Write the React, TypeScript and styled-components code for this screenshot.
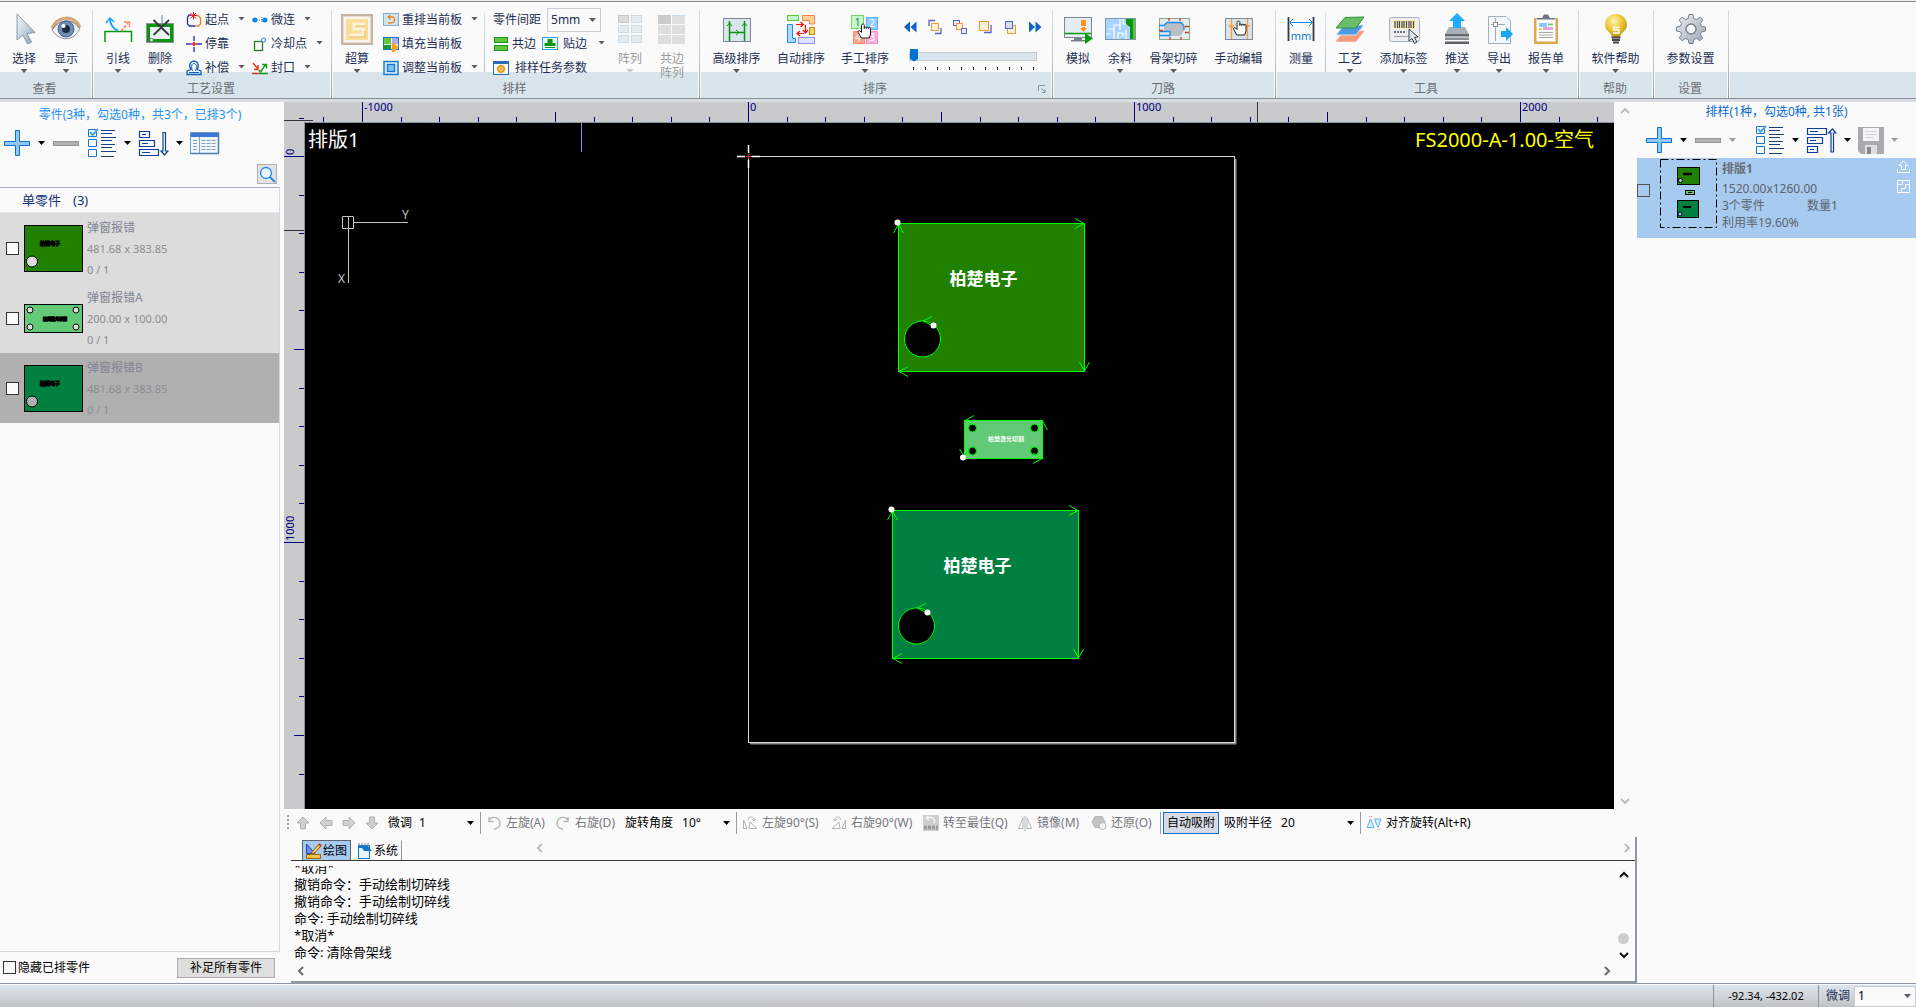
import React from "react";
import styled, { createGlobalStyle, css } from "styled-components";

const Global = createGlobalStyle`
  *, *::before, *::after { box-sizing: border-box; }
  html, body { margin: 0; height: 100%; }
  body {
    background: #fafafa;
    color: #000;
    font-family: "Noto Sans", "Noto Sans CJK SC", sans-serif;
    font-size: 12px;
    line-height: 16px;
    overflow: hidden;
  }
  button, input, select { font: inherit; color: inherit; margin: 0; }
  button { border: 0; padding: 0; background: none; }
  svg { display: block; flex: none; }
`;

/* ---------- shared pieces ---------- */

const Page = styled.div`
  display: flex;
  flex-direction: column;
  height: 100vh;
`;

const caretShape = css`
  flex: none;
  width: 7px;
  height: 4px;
  clip-path: polygon(0 0, 100% 0, 50% 100%);
`;

const Caret = styled.span<{ $color?: string }>`
  ${caretShape}
  background: ${(p) => p.$color || "#5c5c60"};
`;

const CaretButton = styled.button<{ $dim?: boolean }>`
  display: flex;
  align-items: center;
  height: 24px;
  color: ${(p) => (p.$dim ? "#9a9aa6" : "#000")};
  &::after {
    content: "";
    ${caretShape}
    background: currentColor;
  }
`;

const SelectBox = styled.span<{ $w: number; $boxed?: boolean; $h?: number }>`
  display: flex;
  align-items: center;
  width: ${(p) => p.$w}px;
  height: ${(p) => p.$h || 20}px;
  padding-right: 4px;
  ${(p) =>
    p.$boxed &&
    css`
      background: #fafafa;
      border: 1px solid #c9cdd2;
      padding-left: 3px;
    `}
  select {
    flex: 1;
    min-width: 0;
    border: 0;
    padding: 0;
    outline: 0;
    background: none;
    appearance: none;
  }
`;

function Combo(p: { label: string; value: string; w: number; h?: number; boxed?: boolean; caret?: string }) {
  return (
    <SelectBox $w={p.w} $h={p.h} $boxed={p.boxed}>
      <select aria-label={p.label} defaultValue={p.value}>
        <option>{p.value}</option>
      </select>
      <Caret $color={p.caret || "#000"} />
    </SelectBox>
  );
}

/* ---------- ribbon ---------- */

const Ribbon = styled.header`
  display: flex;
  flex: none;
  height: 102px;
  border-top: 1px solid #eeeeee;
  border-bottom: 3px solid #d6dfe8;
  background: linear-gradient(#8c8c8c 1px, #fafafa 1px, #fafafa 71px, #d9e5ed 71px, #d9e5ed 97px, #8c8c8c 97px);
  color: #1c2f55;
`;

const Group = styled.section<{ $w: number }>`
  display: flex;
  flex: none;
  flex-direction: column;
  width: ${(p) => p.$w}px;
  height: 97px;
  padding: 1px 2px 0 3px;
  background:
    linear-gradient(#d3e0e8, #b9c3ca 60%, #9a9a9a) right 1px bottom / 1px 88px no-repeat,
    linear-gradient(#fafafa, #fafafa) right bottom / 3px 88px no-repeat;
`;

const GroupTools = styled.div`
  display: flex;
  height: 78px;
`;

const GroupName = styled.footer`
  position: relative;
  height: 18px;
  padding-right: 6px;
  line-height: 18px;
  text-align: center;
  color: #6c6f73;
`;

const Launcher = styled.button`
  position: absolute;
  right: 6px;
  bottom: 5px;
`;

const BigBtn = styled.button<{ $w: number; $dim?: boolean }>`
  display: flex;
  flex: none;
  flex-direction: column;
  align-items: center;
  width: ${(p) => p.$w}px;
  padding-top: 11px;
  line-height: 14px;
  color: ${(p) => (p.$dim ? "#9a9a9a" : "inherit")};
  > span:nth-child(2) { margin: 7px 0 3px; white-space: pre-line; }
`;

function Big(p: { icon: React.ReactNode; text: string; w?: number; caret?: boolean; dim?: boolean }) {
  return (
    <BigBtn $w={p.w || 42} $dim={p.dim}>
      <svg width="32" height="32" viewBox="0 0 32 32" fill="none">
        {p.icon}
      </svg>
      <span>{p.text}</span>
      {p.caret && <Caret $color={p.dim ? "#c8c8c8" : undefined} />}
    </BigBtn>
  );
}

const SmallCol = styled.div<{ $w?: number }>`
  display: flex;
  flex: none;
  flex-direction: column;
  width: ${(p) => (p.$w ? p.$w + "px" : "auto")};
  padding: 6px 0 0 5px;
`;

const SmallRow = styled.div`
  display: flex;
  align-items: center;
  height: 24px;
  gap: 6px;
`;

const SmallBtn = styled.button<{ $gap?: number }>`
  display: flex;
  align-items: center;
  height: 24px;
  gap: ${(p) => p.$gap || 3}px;
  white-space: nowrap;
  > ${Caret} { margin: 0 0 3px 6px; }
`;

function Small(p: { icon: React.ReactNode; text: string; caret?: boolean; gap?: number }) {
  return (
    <SmallBtn $gap={p.gap}>
      <svg width="16" height="16" viewBox="0 0 16 16" fill="none">
        {p.icon}
      </svg>
      {p.text}
      {p.caret && <Caret />}
    </SmallBtn>
  );
}

const Divider = styled.i`
  flex: none;
  width: 1px;
  height: 60px;
  margin: 10px 3px 0;
  background: linear-gradient(#dfe7ee, #b4bfca);
`;

const NavCol = styled.div`
  display: flex;
  flex: 1;
  flex-direction: column;
  padding: 17px 9px 0 5px;
`;

const NavRow = styled.div`
  display: flex;
  justify-content: space-between;
`;

const Range = styled.input`
  appearance: none;
  width: 128px;
  height: 14px;
  margin: 14px 0 0 7px;
  background: none;
  &::-webkit-slider-runnable-track {
    height: 9px;
    border: 1px solid #c6cbd0;
    background: #d9e5ed;
  }
  &::-webkit-slider-thumb {
    appearance: none;
    width: 8px;
    height: 13px;
    margin-top: -4px;
    background: #0071d4;
    clip-path: polygon(0 0, 100% 0, 100% 80%, 50% 100%, 0 80%);
  }
`;

/* big icons */
const iSelect = (
  <>
    <defs>
      <linearGradient id="cur" x1="0" y1="0" x2="1" y2="1">
        <stop offset="0" stopColor="#f4f8fb" />
        <stop offset="0.5" stopColor="#c3d2df" />
        <stop offset="1" stopColor="#8296a8" />
      </linearGradient>
    </defs>
    <path d="M9 1v26l6-5 4.500 9 4-2-4.500-8.500 8-1z" fill="url(#cur)" stroke="#8d98a6" />
  </>
);
const iEye = (
  <>
    <path d="M2 17C8 3 23 2 30 15C24 29 10 29 2 17Z" fill="#eef1f5" stroke="#8e9097" />
    <path d="M2 15C8 2 24 2 30 14" stroke="#d5a779" strokeWidth="3" />
    <path d="M3 16C9 6 23 5 29 15" stroke="#70625c" strokeWidth="1" />
    <circle cx="16" cy="16" r="8" fill="#6d8cb6" stroke="#44608c" />
    <circle cx="16" cy="16" r="4" fill="#1d2b44" />
    <circle cx="13.500" cy="13" r="2" fill="#fff" />
  </>
);
const iLead = (
  <>
    <path d="M3 29V18.500H29.500V29" stroke="#0a960a" strokeWidth="1.500" />
    <path d="M8 6C8 11 11 16 16 17.500" stroke="#199bff" strokeWidth="1.800" />
    <path d="M4 10L8 5L12 9" stroke="#199bff" strokeWidth="1.500" />
    <path d="M19 18L26 10" stroke="#ff8a6c" strokeWidth="1.800" strokeDasharray="3 1.500" />
    <path d="M22 9H27.500V14" stroke="#ff8a6c" strokeWidth="1.500" />
  </>
);
const iDelete = (
  <>
    <rect x="2" y="10" width="28" height="20" fill="#8d949c" />
    <rect x="3" y="11" width="26" height="18" fill="#0a960a" />
    <rect x="6" y="14" width="20" height="12" fill="#eef3f6" />
    <path d="M18 2V13" stroke="#6d7c8c" />
    <path d="M9.500 7L25 22M25 7L9.500 22" stroke="#37393c" strokeWidth="1.800" />
    <circle cx="7.500" cy="27" r="1.800" fill="#fff" stroke="#5b7a5b" />
  </>
);
const iSuper = (
  <>
    <rect x="1" y="2" width="30" height="29" fill="#f8f5f0" stroke="#c6b3a4" strokeWidth="2" />
    <rect x="2.500" y="3.500" width="27" height="26" stroke="#e6dcd2" />
    <rect x="5" y="6" width="22" height="21" fill="#f7dd96" />
    <path d="M24 11H13V16H22V22H8" stroke="#fdf3d6" strokeWidth="3" />
    <path d="M24 13H15V14.500M24 17.500V24H8" stroke="#e4c477" />
  </>
);
const iArray = (
  <>
    {[0, 1, 2].map((r) =>
      [0, 1].map((c) => (
        <rect key={`${r}${c}`} x={4.5 + c * 13} y={2.5 + r * 10} width="10" height="7"
          fill={r + c ? "#e3ebf0" : "#dcdcdc"} stroke={r + c ? "#cddbe4" : "#c8c8c8"} />
      ))
    )}
  </>
);
const iSharedArray = (
  <>
    {[0, 1, 2].map((r) =>
      [0, 1].map((c) => (
        <rect key={`${r}${c}`} x={2 + c * 14} y={2 + r * 10} width="13" height="9" fill={!r && !c ? "#cccccc" : "#dedede"} />
      ))
    )}
    <path d="M16 2.500H29" stroke="#c9dce8" />
  </>
);
const iAdvSort = (
  <>
    <rect x="2.500" y="5.500" width="27" height="23" fill="#d9e5ed" stroke="#7e8896" />
    <path d="M8.500 28V8M23.500 28V8M9 19.500H23" stroke="#0a960a" strokeWidth="1.500" />
    <path d="M6 13L8.500 10L11 13M21 13L23.500 10L26 13M15 17L18 19.500L15 22" stroke="#0a960a" />
  </>
);
const iAutoSort = (
  <>
    <rect x="2.500" y="2.500" width="11" height="5" fill="#c5f7cc" stroke="#58c942" />
    <path d="M17.500 2.500H29.500V11H24.500V7.500H17.500Z" fill="#ffd398" stroke="#ff7c4c" />
    <path d="M2.500 11.500H7.500V25.500H10.500V29.500H2.500Z" fill="#b0d9ff" stroke="#1990ea" />
    <rect x="24.500" y="14.500" width="5" height="7" fill="#ffd35c" stroke="#c08812" />
    <rect x="13.500" y="24.500" width="16" height="6" fill="#dfe2ff" stroke="#8d90ee" />
    <path d="M11 11.500H18M15.500 9L18.500 11.500L15.500 14M20.500 12V19M18 17L20.500 20L23 17M19 20.500H12M15 18L12 20.500L15 23" stroke="#ff0c0c" strokeWidth="1.200" />
  </>
);
const hand = "M0 0c-1 0-1.500.7-1.500 1.500v7l-1.500-1.500c-1-.8-2.300.2-1.800 1.400l3 5.600h8l1.300-4V4.500c0-1.600-2-1.600-2 0 0-1.800-2.200-1.800-2.200 0 0-2-2-2-2 0V1.500C1.500.7 1 0 0 0z";
const iManualSort = (
  <>
    <rect x="2.500" y="2.500" width="12" height="13" fill="#c5f7cc" stroke="#74d465" />
    <rect x="17.500" y="4.500" width="11" height="12" fill="#92cbff" stroke="#58aef0" />
    <rect x="4.500" y="18.500" width="11" height="12" fill="#f9a68c" stroke="#ff8c68" />
    <rect x="17.500" y="18.500" width="11" height="12" fill="#ffaede" stroke="#f58fcc" />
    <g fontSize="10" textAnchor="middle">
      <text x="8.500" y="13" fill="#15803a">1</text>
      <text x="23" y="14" fill="#fff">2</text>
      <text x="23" y="28" fill="#fff">3</text>
      <text x="9" y="28" fill="#fff">4</text>
    </g>
    <path d={hand} transform="translate(14 11)" fill="#fff" stroke="#1c1c1c" />
  </>
);
const iSim = (
  <>
    <rect x="2.500" y="4.500" width="27" height="20" fill="#e3edf2" stroke="#7d8894" />
    <path d="M3 20.500H29" stroke="#0a960a" strokeWidth="1.500" />
    <path d="M12 25H20V27H23V28.500H9V27H12Z" fill="#76818b" />
    <path d="M19 7H24V13H19ZM20 14H23V15H25L21.500 19L18 15H20Z" fill="#ff9420" />
    <path d="M23 20L31 25.500L23 31Z" fill="#0a960a" />
  </>
);
const iRemain = (
  <>
    <rect x="1.500" y="5.500" width="30" height="21" fill="#a8d4ff" stroke="#7c98ae" />
    <path d="M4 16H10V12H16V17M10 16V26M14 26V20H19V24M16 12V6M2 21H7M19 6V11H22M22 17V26" stroke="#fff" strokeWidth="1.200" />
    <path d="M22 6H30V26H26V14L22 11Z" fill="#0a960a" />
    <path d="M30 6V26" stroke="#62c23e" strokeWidth="2" />
  </>
);
const iSkeleton = (
  <>
    <rect x="1.500" y="5.500" width="30" height="21" fill="#e1ebf1" stroke="#93a48f" />
    <path d="M6 11L9 9H23L26 13V18L22 23H12V18H6Z" fill="#b9bdc4" />
    <path d="M1 12.500H6L9 9.500H23L26 13V17M1 22.500H12V18.500H2" stroke="#1990ea" strokeWidth="1.300" />
    <path d="M1 17.500H5M11 5V8M22 5V8M27 13.500H31M27 19.500H31M23 24V27M12 24V27" stroke="#d63d20" strokeWidth="1.300" />
  </>
);
const iManualEdit = (
  <>
    <rect x="2.500" y="5.500" width="27" height="21" fill="#d9e5ed" stroke="#7e8896" />
    <path d="M8.500 6V26M24.500 6V26M6 12L8.500 15L11 12M21 13H27" stroke="#ff9a30" strokeWidth="1.300" />
    <path d={hand} transform="translate(15.500 8)" fill="#fff" stroke="#1c1c1c" />
  </>
);
const iMeasure = (
  <>
    <path d="M3.500 4V28M28.500 4V28" stroke="#353a42" strokeWidth="1.800" />
    <path d="M5 9.500H27M8 6L4.500 9.500L8 13M24 6L27.500 9.500L24 13" stroke="#1187e8" />
    <text x="16" y="27" fontSize="11" textAnchor="middle" fill="#0a78d8">mm</text>
  </>
);
const iCraft = (
  <>
    <path d="M10 18H30L22 28.500H2Z" fill="#f7997c" stroke="#f6b39d" />
    <path d="M10 12H30L22 22H2Z" fill="#4d9be0" stroke="#d6e9fa" />
    <path d="M11 4.500L30 4L22 15L2 15Z" fill="#6bbd68" stroke="#2f8e3d" />
  </>
);
const iLabel = (
  <>
    <rect x="1.500" y="4.500" width="30" height="24" rx="2" fill="#eceef1" stroke="#a9b1bb" />
    <rect x="5" y="7" width="23" height="9" fill="#fbecb4" />
    <path d="M7 8V15M9.500 8V15M11.500 8V15M14 8V15M16 8V15M18.500 8V15M21 8V15M23 8V15M25.500 8V15" stroke="#44464c" strokeWidth="1.200" />
    <path d="M6 19H18" stroke="#6d7480" strokeWidth="2" strokeDasharray="2 1" />
    <path d="M6 23.500H21" stroke="#9aa2ac" />
    <path d="M21 16V28L24 25.500L26.500 30.500L29 29L26.500 24.500L30 24Z" fill="#dce4ee" stroke="#3c424c" />
  </>
);
const iPush = (
  <>
    <path d="M8 14H24L28 21H4Z" fill="#a9afb6" />
    <rect x="4" y="21" width="24" height="2.500" fill="#646a70" />
    <rect x="4" y="24.500" width="24" height="2.500" fill="#8a9096" />
    <rect x="4" y="28.500" width="24" height="2.500" fill="#5a6066" />
    <path d="M16 0L24 8H20V15H12V8H8Z" fill="#22acff" />
  </>
);
const iExport = (
  <>
    <path d="M5.500 3.500H23L27.500 8V30.500H5.500Z" fill="#f6f9fb" stroke="#a2afbd" />
    <path d="M8 11.500H22M12.500 5V28" stroke="#a4a9af" />
    <rect x="10.500" y="9.500" width="4" height="4" fill="#fff" stroke="#8b9198" />
    <path d="M18 18H23V14L30 21L23 28V24H18Z" fill="#1aa7f5" />
  </>
);
const iReport = (
  <>
    <rect x="4" y="5" width="24" height="26" rx="1" fill="#dca94d" />
    <rect x="6.500" y="6" width="19" height="22.500" fill="#fff" />
    <path d="M7 5H12L14 1.500H18L20 5H25V6.500H7Z" fill="#6c7686" />
    <rect x="9" y="10" width="8" height="4" fill="#8cc8ff" />
    <path d="M18 11.500H23" stroke="#7dd06c" strokeWidth="2" />
    <path d="M9 16H12" stroke="#ffc04d" strokeWidth="2" />
    <rect x="13" y="14" width="10" height="3" fill="#e4a3e4" />
    <path d="M9 19.500H23M9 22H23M9 24.500H23" stroke="#a5a8ac" />
  </>
);
const iHelp = (
  <>
    <defs>
      <radialGradient id="bulb" cx="0.400" cy="0.300" r="0.800">
        <stop offset="0" stopColor="#fff6b4" />
        <stop offset="0.500" stopColor="#ebc531" />
        <stop offset="1" stopColor="#b98c12" />
      </radialGradient>
    </defs>
    <path d="M16 1C9 1 5 6 5 12C5 18 11 19 12 24H20C21 19 27 18 27 12C27 6 23 1 16 1Z" fill="url(#bulb)" />
    <path d="M19.500 14.500H13.500V17H19V20H13" stroke="#fff" strokeWidth="1.300" />
    <path d="M11.500 24.500H20.500M12 27H20M13 29.500H19" stroke="#40464d" strokeWidth="1.800" />
  </>
);
const iGear = (
  <>
    <defs>
      <linearGradient id="gear" x1="0" y1="0" x2="1" y2="1">
        <stop offset="0" stopColor="#eef1f5" />
        <stop offset="1" stopColor="#9aa4b2" />
      </linearGradient>
    </defs>
    <path
      d="M14 1.500h4l.8 4 2.800 1.100 3.300-2.400 2.900 2.900-2.400 3.300 1.100 2.800 4 .8v4l-4 .8-1.100 2.800 2.400 3.300-2.900 2.900-3.300-2.400-2.800 1.100-.8 4h-4l-.8-4-2.800-1.100-3.300 2.400-2.900-2.900 2.400-3.300-1.100-2.800-4-.8v-4l4-.8 1.100-2.800-2.400-3.300 2.900-2.900 3.300 2.400 2.800-1.100z"
      fill="url(#gear)" stroke="#77818f"
    />
    <circle cx="16" cy="16" r="5" fill="#fafafa" stroke="#77818f" strokeWidth="1.500" />
  </>
);

/* small icons */
const sStart = (
  <>
    <path d="M5 3H3L1.500 5.500V12L3.500 14H9" stroke="#2a2ad0" strokeWidth="1.300" />
    <path d="M9 14H12.500L14.500 12V6L12 3.500H10" stroke="#f0801a" strokeWidth="1.300" />
    <path d="M4.500 1L10 6.500M10 1L4.500 6.500M7.500 0V7.500M4 3.500H11" stroke="#f21c1c" />
  </>
);
const sStop = (
  <>
    <path d="M0 8H5M11 8H16M8 0V5M8 11V16" stroke="#2b35dd" strokeWidth="1.400" />
    <path d="M5 8H11M8 6V10" stroke="#f21c1c" strokeWidth="1.600" />
  </>
);
const sComp = (
  <>
    <path d="M1 14.500V11L5 9.500C2 4 5 1 8 1S14 4 11 9.500L15 11V14.500Z" stroke="#1160b8" strokeWidth="1.300" />
    <path d="M3 12.500H13M6.500 11C4.500 6 6 3.500 8 3.500S11.500 6 9.500 11" stroke="#1160b8" />
  </>
);
const sMicro = (
  <>
    <circle cx="3" cy="8" r="2.500" fill="#1187e8" />
    <circle cx="13" cy="8" r="2.500" fill="#1187e8" />
    <path d="M0 8H16" stroke="#1187e8" strokeDasharray="6 1 1 1" />
    <path d="M10 5V11" stroke="#1187e8" strokeDasharray="1 1" />
  </>
);
const sCool = (
  <>
    <rect x="2.500" y="5.500" width="8" height="9" stroke="#2b7a2b" strokeWidth="1.300" />
    <circle cx="11.500" cy="4" r="2" fill="#fff" stroke="#3793ec" strokeWidth="1.200" />
  </>
);
const sSeal = (
  <>
    <path d="M0 13.500H7" stroke="#e03020" strokeWidth="1.500" />
    <path d="M7 13.500H16" stroke="#129a20" strokeWidth="1.500" />
    <path d="M1 3L6 9M6 5V9.500H2" stroke="#e8321e" strokeWidth="1.400" />
    <path d="M7 10L8.500 12L14 4M10 4.500H14.500V8.500" stroke="#129a20" strokeWidth="1.400" />
  </>
);
const sRearrange = (
  <>
    <rect x="0.500" y="1.500" width="15" height="12" fill="#cfe3f2" stroke="#84aecb" />
    <path d="M6 5H9C13 5 12 11 8.500 11H5M7.500 3L5 5L7.500 7.500" stroke="#f08a1c" strokeWidth="1.300" />
  </>
);
const sFill = (
  <>
    <rect x="0.500" y="1.500" width="15" height="12" fill="#e6f2fc" stroke="#1477cf" />
    <rect x="1" y="2" width="7" height="6" fill="#62c83a" />
    <rect x="9" y="2" width="6" height="6" fill="#b7a6f5" />
    <rect x="1" y="9" width="7" height="4" fill="#1d9a2a" />
    <path d="M9 7H11L15.500 11.500L11 16H9Z" fill="#ff9c1a" />
  </>
);
const sAdjust = (
  <>
    <rect x="1" y="1.500" width="14" height="13" fill="#d8eafa" stroke="#1477cf" strokeWidth="1.400" />
    <rect x="4.500" y="4.500" width="7" height="7" fill="#7ec0f8" stroke="#1477cf" strokeWidth="1.300" />
  </>
);
const sShared = (
  <>
    <rect x="1.500" y="1.500" width="13" height="5" fill="#62c83a" stroke="#1d9322" />
    <rect x="1.500" y="9.500" width="13" height="5" fill="#62c83a" stroke="#1d9322" />
  </>
);
const sEdge = (
  <>
    <rect x="0.500" y="1.500" width="15" height="12" fill="#eef8ff" stroke="#36a2f2" />
    <path d="M5.500 3H10.500V7H13.500V10H2.500V7H5.500Z" fill="#0a960a" />
    <path d="M3 11.500H13" stroke="#0a960a" />
  </>
);
const sTask = (
  <>
    <rect x="0.500" y="1.500" width="15" height="13" fill="#f4f7fb" stroke="#2d6bb3" />
    <path d="M1 3H15" stroke="#2d6bb3" strokeWidth="2" />
    <circle cx="8" cy="9" r="3" stroke="#e8a01c" strokeWidth="2" />
    <path d="M8 4.500V13.500M3.500 9H12.500" stroke="#e8a01c" />
  </>
);

const navIcons = [
  <path d="M8 2.500V13.500L2 8ZM14.500 2.500V13.500L8.500 8Z" fill="#0f62c8" />,
  <><path d="M2 7V1.500H8M14 9V14.500H8" stroke="#5b63c9" strokeWidth="1.300" /><rect x="4.500" y="4.500" width="7" height="7" fill="#fff3dc" stroke="#f0963c" /></>,
  <><rect x="1.500" y="1.500" width="6" height="5" fill="#e6ecf8" stroke="#5b63c9" /><rect x="4.500" y="4.500" width="6" height="6" fill="#fff0cf" stroke="#f0963c" /><rect x="9.500" y="9.500" width="5" height="5" fill="#e6ecf8" stroke="#5b63c9" /></>,
  <><path d="M14 6V13.500H7" stroke="#5b63c9" strokeWidth="1.300" /><rect x="2.500" y="2.500" width="9" height="9" fill="#fff0cf" stroke="#f0963c" /></>,
  <><rect x="5.500" y="6.500" width="8" height="8" fill="#fff0cf" stroke="#f0963c" /><rect x="3.500" y="2.500" width="7" height="7" fill="#d2def0" stroke="#5b63c9" /></>,
  <path d="M2 2.500V13.500L8 8ZM8.500 2.500V13.500L14.500 8Z" fill="#0f62c8" />,
];
const navNames = ["最前", "前移", "上移", "下移", "后移", "最后"];

function RibbonBar() {
  return (
    <Ribbon>
      <Group $w={94}>
        <GroupTools>
          <Big icon={iSelect} text="选择" caret />
          <Big icon={iEye} text="显示" caret />
        </GroupTools>
        <GroupName>查看</GroupName>
      </Group>
      <Group $w={239}>
        <GroupTools>
          <Big icon={iLead} text="引线" caret />
          <Big icon={iDelete} text="删除" caret />
          <SmallCol $w={66}>
            <Small icon={sStart} text="起点" caret />
            <Small icon={sStop} text="停靠" />
            <Small icon={sComp} text="补偿" caret />
          </SmallCol>
          <SmallCol>
            <Small icon={sMicro} text="微连" caret />
            <Small icon={sCool} text="冷却点" caret />
            <Small icon={sSeal} text="封口" caret />
          </SmallCol>
        </GroupTools>
        <GroupName>工艺设置</GroupName>
      </Group>
      <Group $w={368}>
        <GroupTools>
          <Big icon={iSuper} text="超算" caret />
          <SmallCol $w={103}>
            <Small icon={sRearrange} text="重排当前板" caret />
            <Small icon={sFill} text="填充当前板" />
            <Small icon={sAdjust} text="调整当前板" caret />
          </SmallCol>
          <Divider />
          <SmallCol $w={121}>
            <SmallRow>
              零件间距
              <Combo label="零件间距" value="5mm" w={54} h={24} boxed caret="#5c5c60" />
            </SmallRow>
            <SmallRow>
              <Small icon={sShared} text="共边" />
              <Small icon={sEdge} text="贴边" gap={5} caret />
            </SmallRow>
            <Small icon={sTask} text="排样任务参数" gap={6} />
          </SmallCol>
          <Big icon={iArray} text="阵列" caret dim />
          <Big icon={iSharedArray} text={"共边\n阵列"} dim />
        </GroupTools>
        <GroupName>排样</GroupName>
      </Group>
      <Group $w={353}>
        <GroupTools>
          <Big icon={iAdvSort} text="高级排序" w={65} caret />
          <Big icon={iAutoSort} text="自动排序" w={64} />
          <Big icon={iManualSort} text="手工排序" w={64} caret />
          <NavCol>
            <NavRow>
              {navIcons.map((icon, i) => (
                <button key={i} aria-label={navNames[i]}>
                  <svg width="16" height="16" viewBox="0 0 16 16" fill="none">{icon}</svg>
                </button>
              ))}
            </NavRow>
            <Range type="range" aria-label="排序位置" min={0} max={10} defaultValue={0} />
            <svg width="134" height="10" viewBox="0 0 134 10">
              {Array.from({ length: 11 }, (_, i) => (
                <rect key={i} x={11 + i * 12} y="4" width="1" height="3" fill="#222" />
              ))}
            </svg>
          </NavCol>
        </GroupTools>
        <GroupName>
          排序
          <Launcher aria-label="排序选项">
            <svg width="8" height="8" viewBox="0 0 8 8" fill="none">
              <path d="M0.500 6V0.500H7M3.500 3.500L7 7M7 4V7.500H4" stroke="#8a97a4" />
            </svg>
          </Launcher>
        </GroupName>
      </Group>
      <Group $w={223}>
        <GroupTools>
          <Big icon={iSim} text="模拟" />
          <Big icon={iRemain} text="余料" caret />
          <Big icon={iSkeleton} text="骨架切碎" w={65} caret />
          <Big icon={iManualEdit} text="手动编辑" w={65} />
        </GroupTools>
        <GroupName>刀路</GroupName>
      </Group>
      <Group $w={303}>
        <GroupTools>
          <Big icon={iMeasure} text="测量" />
          <Divider />
          <Big icon={iCraft} text="工艺" caret />
          <Big icon={iLabel} text="添加标签" w={65} caret />
          <Big icon={iPush} text="推送" caret />
          <Big icon={iExport} text="导出" caret />
          <Big icon={iReport} text="报告单" w={52} caret />
        </GroupTools>
        <GroupName>工具</GroupName>
      </Group>
      <Group $w={75}>
        <GroupTools>
          <Big icon={iHelp} text="软件帮助" w={65} caret />
        </GroupTools>
        <GroupName>帮助</GroupName>
      </Group>
      <Group $w={75}>
        <GroupTools>
          <Big icon={iGear} text="参数设置" w={65} />
        </GroupTools>
        <GroupName>设置</GroupName>
      </Group>
    </Ribbon>
  );
}

/* ---------- side panels ---------- */

const Body = styled.main`
  display: flex;
  flex: 1;
  min-height: 0;
  border-bottom: 1px solid #9098a4;
`;

const LeftPanel = styled.aside`
  display: flex;
  flex: none;
  flex-direction: column;
  width: 284px;
`;

const PanelTitle = styled.h2<{ $h: number; $color: string }>`
  margin: 0;
  height: ${(p) => p.$h}px;
  padding-right: 4px;
  font-size: 12px;
  font-weight: 400;
  line-height: ${(p) => p.$h}px;
  text-align: center;
  color: ${(p) => p.$color};
`;

const PanelTools = styled.div`
  display: flex;
  align-items: center;
  height: 32px;
  gap: 7px;
  padding-left: 4px;
`;

const ToolCluster = styled.div<{ $gap: number }>`
  display: flex;
  align-items: center;
  gap: 8px;
  margin-right: ${(p) => p.$gap}px;
`;

const SearchRow = styled.div`
  display: flex;
  justify-content: flex-end;
  height: 28px;
  padding: 5px 7px 0 0;
`;

const SearchBtn = styled.button`
  display: grid;
  place-items: center;
  width: 20px;
  height: 20px;
  border: 1px solid #b0b0b0;
  background: #e2e2e2;
`;

const PartList = styled.div`
  flex: 1;
  width: 280px;
  border: solid #d5d8dd;
  border-width: 0 1px 1px 0;
  border-top: 1px solid #a7b0c0;
`;

const ListHead = styled.h3`
  display: flex;
  gap: 12px;
  height: 25px;
  margin: 0;
  padding-left: 22px;
  border-bottom: 1px solid #dde7ee;
  font-size: 13px;
  font-weight: 400;
  line-height: 24px;
  color: #12307c;
`;

const PartRow = styled.label<{ $active?: boolean }>`
  display: flex;
  align-items: center;
  height: 70px;
  padding-left: 6px;
  background: ${(p) => (p.$active ? "#b0b0b0" : "#dcdcdc")};
  color: #8b8c90;
  > svg { margin: 0 4px 0 5px; }
`;

const Tick = styled.input`
  appearance: none;
  flex: none;
  width: 13px;
  height: 13px;
  border: 1px solid #333;
  background: #fafafa;
`;

const PartInfo = styled.div`
  display: flex;
  flex-direction: column;
  font-size: 11px;
  line-height: 21px;
  b { font-size: 12px; font-weight: 400; color: #7f8695; }
`;

const LeftFoot = styled.div`
  display: flex;
  align-items: center;
  justify-content: space-between;
  height: 31px;
  padding: 0 9px 0 3px;
  label { display: flex; align-items: center; gap: 2px; }
  button {
    width: 98px;
    height: 20px;
    border: 1px solid #adadad;
    background: #dedede;
    line-height: 18px;
  }
`;

const icoPlus = (
  <svg width="26" height="26" viewBox="0 0 26 26"><path d="M11.500 0.500H15.500V11.500H25.500V15.500H15.500V25.500H11.500V15.500H0.500V11.500H11.500Z" fill="#90c8fa" stroke="#0f72cf" /></svg>
);
const icoMinus = (
  <svg width="26" height="26" viewBox="0 0 26 26"><rect x="0.500" y="11.500" width="25" height="4" fill="#b0b0b0" stroke="#989898" /></svg>
);
const icoChecks = (
  <svg width="30" height="30" viewBox="0 0 30 30" fill="none">
    <path d="M1.500 1.500H9.500V8.500H1.500ZM1.500 11.500H9.500V18.500H1.500ZM1.500 21.500H9.500V28.500H1.500Z" stroke="#1577d0" />
    <path d="M3 4L5.500 7L11 1" stroke="#4fa7f0" strokeWidth="2" />
    <path d="M14 2.500H28M14 5.500H25M14 9.500H29M14 12.500H25M14 16.500H28M14 19.500H25M14 23.500H29M14 28.500H27" stroke="#1d3f7a" />
  </svg>
);
const icoSortDown = (
  <svg width="31" height="28" viewBox="0 0 31 28" fill="none" stroke="#0c40a0" strokeWidth="1.200">
    <path d="M1.500 2.500H11.500V8.500H1.500ZM1.500 11.500H16.500V17.500H1.500ZM1.500 20.500H20.500V26.500H1.500ZM4 5.500H8M4 14.500H10M4 23.500H12" />
    <path d="M25 3.500H27.500V22H30L26.500 26L23 22H25Z" />
  </svg>
);
const icoSortUp = (
  <svg width="31" height="28" viewBox="0 0 31 28" fill="none" stroke="#0c40a0" strokeWidth="1.200">
    <path d="M1.500 2.500H20.500V8.500H1.500ZM1.500 11.500H16.500V17.500H1.500ZM1.500 20.500H11.500V26.500H1.500ZM4 5.500H12M4 14.500H10M4 23.500H8" />
    <path d="M25 26V7H22.500L26.500 3L30 7H27.500V26Z" />
  </svg>
);
const icoTable = (
  <svg width="30" height="24" viewBox="0 0 30 24" fill="none">
    <rect x="0.500" y="1.500" width="28" height="21" fill="#eef5fb" stroke="#6d9bc6" />
    <rect x="1" y="2" width="27" height="4" fill="#3d78d6" />
    <path d="M9.500 6V22" stroke="#7ca4cc" />
    <path d="M3 9.500H7M3 12.500H7M3 15.500H7M3 18.500H7M11.500 9.500H26M11.500 12.500H26M11.500 15.500H26M11.500 18.500H26" stroke="#8a9db8" strokeDasharray="4 1" />
    <path d="M1 22.500H29M28.500 2V22" stroke="#4f7fb0" strokeWidth="1.500" />
  </svg>
);
const icoSave = (
  <svg width="26" height="27" viewBox="0 0 26 27">
    <path d="M0 0H26V27H3L0 24Z" fill="#a8aaad" />
    <rect x="5" y="1" width="16" height="13" fill="#f4f5f6" />
    <path d="M7 4.500H19M7 7.500H19M7 10.500H16" stroke="#d3d7db" />
    <rect x="7" y="18" width="12" height="9" fill="#dcdee0" />
    <rect x="9" y="20" width="4" height="7" fill="#85888c" />
  </svg>
);

const parts = [
  { name: "弹窗报错", size: "481.68 x 383.85", color: "#208000", small: false },
  { name: "弹窗报错A", size: "200.00 x 100.00", color: "#62c976", small: true },
  { name: "弹窗报错B", size: "481.68 x 383.85", color: "#008040", small: false },
];

function Thumb({ color, small, bg }: { color: string; small: boolean; bg: string }) {
  return (
    <svg width="59" height="48" viewBox="0 0 59 48" stroke="#000">
      {small ? (
        <>
          <rect x="0.500" y="10.500" width="58" height="28" fill={color} />
          {[[6, 16], [52, 16], [6, 33], [52, 33]].map(([x, y]) => (
            <circle key={`${x}-${y}`} cx={x} cy={y} r="3" fill={bg} />
          ))}
          <text x="31" y="27" fontSize="4" textAnchor="middle" strokeWidth="1">柏楚激光切割</text>
        </>
      ) : (
        <>
          <rect x="0.500" y="1.500" width="58" height="46" fill={color} />
          <circle cx="8" cy="37.500" r="5.500" fill={bg} />
          <text x="26" y="21" fontSize="5" textAnchor="middle" strokeWidth="1">柏楚电子</text>
        </>
      )}
    </svg>
  );
}

function Parts() {
  return (
    <LeftPanel>
      <PanelTitle $h={25} $color="#2492f5">零件(3种，勾选0种，共3个，已排3个)</PanelTitle>
      <PanelTools>
        <ToolCluster $gap={1}>
          <button aria-label="添加零件">{icoPlus}</button>
          <CaretButton aria-label="添加选项" />
          <button aria-label="删除零件">{icoMinus}</button>
        </ToolCluster>
        <button aria-label="勾选">{icoChecks}</button>
        <CaretButton aria-label="勾选选项" />
        <button aria-label="排序">{icoSortDown}</button>
        <CaretButton aria-label="排序选项" />
        <button aria-label="零件表">{icoTable}</button>
      </PanelTools>
      <SearchRow>
        <SearchBtn aria-label="搜索">
          <svg width="17" height="17" viewBox="0 0 17 17" fill="none" stroke="#2089ee" strokeWidth="1.300">
            <circle cx="7" cy="7" r="5.500" fill="#eaf4fd" />
            <path d="M11 11L16 16" strokeWidth="2" />
          </svg>
        </SearchBtn>
      </SearchRow>
      <PartList>
        <ListHead><span>单零件</span><span>(3)</span></ListHead>
        {parts.map((p, i) => (
          <PartRow key={p.name} $active={i === 2}>
            <Tick type="checkbox" />
            <Thumb color={p.color} small={p.small} bg={i === 2 ? "#b0b0b0" : "#dcdcdc"} />
            <PartInfo>
              <b>{p.name}</b>
              <span>{p.size}</span>
              <span>0 / 1</span>
            </PartInfo>
          </PartRow>
        ))}
      </PartList>
      <LeftFoot>
        <label><Tick type="checkbox" />隐藏已排零件</label>
        <button>补足所有零件</button>
      </LeftFoot>
    </LeftPanel>
  );
}

const RightPanel = styled.aside`
  flex: none;
  width: 279px;
  > ${PanelTools} { padding-left: 9px; height: 36px; }
  > ${PanelTitle} { padding-right: 0; }
`;

const NestCard = styled.label`
  display: flex;
  align-items: flex-start;
  height: 80px;
  background: #a6caf0;
  color: #5d646c;
  > ${Tick} { margin-top: 26px; background: none; border-color: #555; }
  > svg { margin: 1px 4px 0 10px; }
`;

const NestInfo = styled.div`
  flex: 1;
  line-height: 17px;
  b { display: block; line-height: 22px; color: #6a6f75; }
  p { margin: 0; display: flex; gap: 42px; }
`;

const NestActions = styled.div`
  display: flex;
  flex-direction: column;
  gap: 6px;
  padding: 2px 6px 0 0;
`;

function Nests() {
  return (
    <RightPanel>
      <PanelTitle $h={20} $color="#0a6cd0">排样(1种，勾选0种, 共1张)</PanelTitle>
      <PanelTools>
        <ToolCluster $gap={12}>
          <button aria-label="添加排样">{icoPlus}</button>
          <CaretButton aria-label="添加选项" />
          <button aria-label="删除排样">{icoMinus}</button>
          <CaretButton $dim aria-label="删除选项" />
        </ToolCluster>
        <button aria-label="勾选">{icoChecks}</button>
        <CaretButton aria-label="勾选选项" />
        <button aria-label="排序">{icoSortUp}</button>
        <CaretButton aria-label="排序选项" />
        <button aria-label="保存">{icoSave}</button>
        <CaretButton $dim aria-label="保存选项" />
      </PanelTools>
      <NestCard>
        <Tick type="checkbox" />
        <svg width="58" height="70" viewBox="0 0 58 70" stroke="#000">
          <rect x="0.500" y="0.500" width="56" height="68" fill="none" strokeDasharray="8 3 2 3" />
          <rect x="17.500" y="8.500" width="22" height="17" fill="#208000" />
          <path d="M23 15H32" strokeWidth="2.500" />
          <circle cx="20.500" cy="21.500" r="2" fill="#a6caf0" />
          <rect x="25.500" y="31.500" width="9" height="4" fill="#62c976" />
          <path d="M28 33.500H32" />
          <rect x="17.500" y="41.500" width="21" height="17" fill="#008040" />
          <path d="M23 48H31" strokeWidth="2" />
          <circle cx="20" cy="55" r="2" fill="#a6caf0" />
        </svg>
        <NestInfo>
          <b>排版1</b>
          <p>1520.00x1260.00</p>
          <p><span>3个零件</span><span>数量1</span></p>
          <p>利用率19.60%</p>
        </NestInfo>
        <NestActions>
          <button aria-label="导出排版">
            <svg width="13" height="14" viewBox="0 0 13 14" fill="none" stroke="#fff">
              <path d="M4.500 9.500V5.500H2L6.500 1L11 5.500H8.500V9.500ZM0.500 9V12.500H12.500V9" />
            </svg>
          </button>
          <button aria-label="查看排版">
            <svg width="13" height="14" viewBox="0 0 13 14" fill="none" stroke="#fff">
              <path d="M0.500 0.500H12.500V12.500H0.500ZM1 4.500H5.500V1M5 8.500H8.500V4.500H12M4.500 12V8.500" />
            </svg>
          </button>
        </NestActions>
      </NestCard>
    </RightPanel>
  );
}

/* ---------- drawing area ---------- */

const Center = styled.div`
  display: flex;
  flex: 1;
  flex-direction: column;
  min-width: 0;
`;

const DrawRow = styled.div`
  display: flex;
  flex: 1;
  min-height: 0;
`;

const Board = styled.div`
  display: grid;
  flex: 1;
  grid-template: 20px minmax(0, 1fr) / 20px minmax(0, 1fr);
  min-width: 0;
  background: #c8cacc;
`;

const Ruler = styled.svg`
  overflow: visible;
  font-size: 11px;
  fill: #000080;
`;

const Canvas = styled.div`
  position: relative;
  overflow: hidden;
  background: #000;
  border: solid #8a94a4;
  border-width: 1px 0 0 1px;
`;

const CanvasTitle = styled.span<{ $right?: boolean }>`
  position: absolute;
  top: 4px;
  ${(p) => (p.$right ? "right: 20px; color: #ffff00;" : "left: 3px; color: #fff;")}
  font-size: 20px;
  line-height: 26px;
`;

const VScroll = styled.div`
  display: flex;
  flex: none;
  flex-direction: column;
  justify-content: space-between;
  width: 23px;
  padding: 4px 0 3px 6px;
`;

const UNIT = 38.6;

function TopRuler() {
  const zero = 444;
  return (
    <Ruler width="100%" height="20" shapeRendering="crispEdges">
      {Array.from({ length: 34 }, (_, k) => k - 11).map((n) => {
        const x = Math.round(zero + n * UNIT);
        const h = n % 10 === 0 ? 20 : n % 5 === 0 ? 10 : 5;
        return <rect key={n} x={x} y={20 - h} width="1" height={h} />;
      })}
      <rect x="953" y="0" width="1" height="20" fill="#333" />
      {[-1, 0, 1, 2].map((n) => (
        <text key={n} x={zero + n * 386 + 2} y="9">{n * 1000}</text>
      ))}
    </Ruler>
  );
}

function SideRuler() {
  const zero = 34;
  return (
    <Ruler width="20" height="100%" shapeRendering="crispEdges">
      <rect x="15" y="-4" width="5" height="1" />
      <rect x="0" y="-2" width="29" height="1" fill="#333" />
      {Array.from({ length: 17 }, (_, k) => k).map((n) => {
        const y = Math.round(zero + n * UNIT);
        const w = n % 10 === 0 ? 20 : n % 5 === 0 ? 10 : 5;
        return <rect key={n} x={20 - w} y={y} width={w} height="1" />;
      })}
      <rect x="0" y="108" width="20" height="1" fill="#333" />
      {[0, 1].map((n) => (
        <text key={n} transform={`translate(10 ${zero + n * 386 - 1}) rotate(-90)`}>{n * 1000}</text>
      ))}
    </Ruler>
  );
}

const LIME = "#00ff00";

function Sheet({ fill }: { fill: string }) {
  return (
    <g>
      <rect x="0.500" y="0.500" width="186" height="148" fill={fill} stroke={LIME} />
      <path
        d="M-4.500 10L0.500 1L5.500 10M177 -4.500L186 0.500L177 5.500M181.500 139L186.500 148L191.500 139M10 143.500L1 148.500L10 153.500"
        fill="none" stroke={LIME}
      />
      <circle cx="24.500" cy="116" r="18" fill="#000" stroke={LIME} />
      <path d="M34 93.500L25 98L33 102" fill="none" stroke={LIME} />
      <circle cx="35.500" cy="102.500" r="3" fill="#fff" />
      <circle cx="-0.500" cy="-0.500" r="3" fill="#fff" />
      <text x="85.500" y="62" fontSize="17" fontWeight="700" textAnchor="middle" fill="#fff">柏楚电子</text>
    </g>
  );
}

function Drawing() {
  return (
    <svg width="100%" height="100%" fill="none">
      {/* origin marker */}
      <path d="M37.500 93.500H48.500V105.500H37.500ZM43.500 94V160M48 99.500H103" stroke="#c4c4c4" />
      <g fontSize="12" fill="#c4c4c4">
        <text x="97" y="96">Y</text>
        <text x="33" y="160">X</text>
      </g>
      <path d="M276.500 0V29" stroke="#8c8cff" />
      {/* plate */}
      <path d="M445 620.500H930.500V36" stroke="#8c8c8c" strokeWidth="2" />
      <rect x="443.500" y="33.500" width="486" height="586" stroke="#d8d8d8" fill="#000" />
      <path d="M432 33.500H440M447 33.500H455M443.500 22V30M443.500 37V45" stroke="#fff" strokeWidth="1.500" />
      <path d="M441 33.500H446M443.500 31V36" stroke="#e0204a" />
      <g transform="translate(593 100)"><Sheet fill="#208000" /></g>
      <g transform="translate(587 387)"><Sheet fill="#008040" /></g>
      <g transform="translate(659 297)">
        <rect x="0.500" y="0.500" width="78" height="38" fill="#62c976" stroke={LIME} />
        {[[8.5, 8], [70.5, 8], [8.5, 31], [70.5, 31]].map(([x, y]) => (
          <circle key={`${x}-${y}`} cx={x} cy={y} r="4" fill="#000" stroke={LIME} />
        ))}
        <path d="M10 -4.500L1 0.500L10 5M74 9L78.500 1L83.500 10M69 43.500L78 38.500L69 33M-4.500 29L0.500 37L5 30" stroke={LIME} />
        <circle cx="-1" cy="37.500" r="3" fill="#fff" />
        <text x="42" y="21" fontSize="6" fontWeight="700" textAnchor="middle" fill="#fff">柏楚激光切割</text>
      </g>
    </svg>
  );
}

const Chevron = ({ d, color = "#b9bec5" }: { d: "up" | "down" | "left" | "right"; color?: string }) => {
  const paths = {
    up: "M1 7L5 3L9 7",
    down: "M1 3L5 7L9 3",
    left: "M7 1L3 5L7 9",
    right: "M3 1L7 5L3 9",
  };
  return (
    <svg width="10" height="10" viewBox="0 0 10 10" fill="none" stroke={color} strokeWidth="2">
      <path d={paths[d]} />
    </svg>
  );
};

/* ---------- edit toolbar ---------- */

const EditBar = styled.div`
  display: flex;
  flex: none;
  align-items: center;
  height: 28px;
  padding-left: 3px;
  white-space: nowrap;
`;

const Grip = styled.i`
  width: 2px;
  height: 16px;
  margin-right: 6px;
  background: repeating-linear-gradient(#9aa0a8 0 2px, transparent 2px 4px);
`;

const Nudge = styled.div`
  display: flex;
  gap: 7px;
  margin-right: 8px;
`;

const Field = styled.div<{ $gap: number }>`
  display: flex;
  align-items: center;
  gap: ${(p) => p.$gap}px;
`;

const EditSep = styled.i<{ $tight?: boolean }>`
  width: 1px;
  height: 22px;
  margin: 0 ${(p) => (p.$tight ? 2 : 5)}px 0 ${(p) => (p.$tight ? 3 : 2)}px;
  background: #989ea6;
`;

const EditBtn = styled.button<{ $w?: number; $on?: boolean }>`
  display: flex;
  align-items: center;
  gap: 4px;
  width: ${(p) => (p.$w ? p.$w + "px" : "auto")};
  color: ${(p) => (p.$on ? "#000" : "#75777a")};
`;

const SnapBtn = styled.button`
  width: 56px;
  height: 22px;
  margin-right: 5px;
  border: 1px solid #0f6fd0;
  background: #d6dbe4;
`;

function Edit(p: { icon: React.ReactNode; text: string; w?: number; on?: boolean }) {
  return (
    <EditBtn $w={p.w} $on={p.on}>
      <svg width="16" height="16" viewBox="0 0 16 16" fill="none" stroke="#b5b5b5">{p.icon}</svg>
      {p.text}
    </EditBtn>
  );
}

function EditToolbar() {
  return (
    <EditBar>
      <Grip />
      <Nudge>
        {[0, 270, 90, 180].map((a, i) => (
          <button key={a} aria-label={["上移", "左移", "右移", "下移"][i]}>
            <svg width="16" height="16" viewBox="0 0 16 16">
              <path d="M8 2L14 8H10.500V14H5.500V8H2Z" fill="#d0d0d0" stroke="#aeb2b6" transform={`rotate(${a} 8 8)`} />
            </svg>
          </button>
        ))}
      </Nudge>
      <Field $gap={7}>微调<Combo label="微调" value="1" w={59} /></Field>
      <EditSep />
      <Edit w={69} icon={<path d="M3 6C5 0 14 2 14 8.500C14 12 11 14 8 14M3 2V6.500H7.500" strokeWidth="1.400" />} text="左旋(A)" />
      <Edit w={70} icon={<path d="M13 6C11 0 2 2 2 8.500C2 12 5 14 8 14M13 2V6.500H8.500" strokeWidth="1.400" />} text="右旋(D)" />
      <Field $gap={9}>旋转角度<Combo label="旋转角度" value="10°" w={52} /></Field>
      <EditSep />
      <Edit w={89} icon={<path d="M1.500 13.500V5L5 13.500ZM7 13.500H15L8 7ZM6 5C7 1 12 1 12 5M10 4L12 6L14 4" />} text="左旋90°(S)" />
      <Edit w={92} icon={<path d="M14.500 13.500V5L11 13.500ZM9 13.500H1L8 7ZM4 5C4 1 9 1 10 5M2 4L4 6L6 4" />} text="右旋90°(W)" />
      <Edit w={94}
        icon={<><rect width="16" height="16" fill="#cfcfcf" stroke="none" /><path d="M4 3C9 1 13 4 11 8M5 1L3 3.500L6 5" stroke="#f4f4f4" strokeWidth="1.400" /><path d="M1 12.500H15" stroke="#999" strokeWidth="4" strokeDasharray="3 1" /></>}
        text="转至最佳(Q)" />
      <Edit w={74} icon={<path d="M1.500 13.500L6 3V13.500ZM10 3V13.500H14.500ZM8 1V16" />} text="镜像(M)" />
      <Edit w={66}
        icon={<><path d="M1 7L4 1.500H11L14 7L11 12.500H4Z" fill="#c4c4c4" /><circle cx="11.500" cy="11" r="3.500" fill="#f2f2f2" /></>}
        text="还原(O)" />
      <EditSep $tight />
      <SnapBtn>自动吸附</SnapBtn>
      <Field $gap={9}>吸附半径<Combo label="吸附半径" value="20" w={77} /></Field>
      <EditSep />
      <Edit on
        icon={<><path d="M1 12.500L4.500 4L8 12.500Z" fill="#d8ecfb" stroke="#66b4ee" /><path d="M8.500 4H15L12 12.500Z" fill="#d8ecfb" stroke="#66b4ee" /><path d="M3 1.500H6M11 14.500H14" stroke="#f2936c" strokeDasharray="1 1" /></>}
        text="对齐旋转(Alt+R)" />
    </EditBar>
  );
}

/* ---------- command output ---------- */

const Output = styled.section`
  display: flex;
  flex: none;
  flex-direction: column;
  height: 146px;
  margin-left: 7px;
  border-right: 2px solid #9098a4;
  border-bottom: 2px solid #9098a4;
`;

const TabBar = styled.div`
  display: flex;
  align-items: center;
  flex: none;
  height: 24px;
  padding: 3px 3px 0 11px;
  border-bottom: 1px solid #3c3c3c;
`;

const Tab = styled.button<{ $on?: boolean }>`
  display: flex;
  align-items: center;
  gap: 1px;
  height: 20px;
  margin-right: 4px;
  padding: 0 3px 0 2px;
  border: solid ${(p) => (p.$on ? "#5b6470" : "transparent")};
  border-width: 1px 1px 0;
  background: ${(p) => (p.$on ? "#a6caf0" : "none")};
  & + & { border-right-color: #8c9299; padding-left: 0; }
`;

const TabFill = styled.div`
  display: flex;
  flex: 1;
  align-items: center;
  justify-content: space-between;
  padding: 0 0 4px 129px;
`;

const LogArea = styled.div`
  display: flex;
  flex: 1;
  min-height: 0;
  padding-top: 5px;
`;

const LogColumn = styled.div`
  display: flex;
  flex: 1;
  flex-direction: column;
  min-width: 0;
`;

const LogText = styled.div`
  display: flex;
  flex: 1;
  flex-direction: column;
  justify-content: flex-end;
  overflow: hidden;
  padding-left: 3px;
  font-size: 13px;
  line-height: 17px;
  white-space: pre;
`;

const HScroll = styled.div`
  display: flex;
  align-items: center;
  justify-content: space-between;
  height: 20px;
  padding: 0 0 0 5px;
`;

const LogScroll = styled.div`
  display: flex;
  flex-direction: column;
  align-items: center;
  width: 23px;
  padding: 4px 0 21px;
`;

const Knob = styled.i`
  width: 11px;
  height: 11px;
  margin: auto 0 6px;
  border-radius: 50%;
  background: #cfcdcd;
`;

const logLines = ["*取消*", "撤销命令：手动绘制切碎线", "撤销命令：手动绘制切碎线", "命令: 手动绘制切碎线", "*取消*", "命令: 清除骨架线"];

function CommandOutput() {
  return (
    <Output>
      <TabBar>
        <Tab $on>
          <svg width="17" height="17" viewBox="0 0 17 17" fill="none">
            <path d="M1.500 2V11.500H10Z" fill="#6b8ee8" stroke="#2346b4" />
            <path d="M7 10L14 2L16 4L9 11.500L6.500 12Z" fill="#ffcb45" stroke="#8a5a10" />
            <path d="M14 2L16 4" stroke="#d82a1a" strokeWidth="2" />
            <rect x="1.500" y="12.500" width="14" height="4" fill="#f6c24c" stroke="#9a6a14" />
          </svg>
          绘图
        </Tab>
        <Tab>
          <svg width="17" height="17" viewBox="0 0 17 17" fill="none">
            <rect x="2.500" y="3.500" width="11" height="13" fill="#eaf4ff" stroke="#1477cf" />
            <path d="M3 1V4M6 1V4M9 1V4M12 1V4" stroke="#7c8896" />
            <path d="M2 4H12L16 9H8L6 6H2Z" fill="#1477cf" />
          </svg>
          系统
        </Tab>
        <TabFill>
          <Chevron d="left" />
          <Chevron d="right" />
        </TabFill>
      </TabBar>
      <LogArea>
        <LogColumn>
          <LogText>
            {logLines.map((l, i) => <div key={i}>{l}</div>)}
          </LogText>
          <HScroll>
            <Chevron d="left" color="#66696e" />
            <Chevron d="right" color="#66696e" />
          </HScroll>
        </LogColumn>
        <LogScroll>
          <Chevron d="up" color="#111" />
          <Knob />
          <Chevron d="down" color="#111" />
        </LogScroll>
      </LogArea>
    </Output>
  );
}

/* ---------- status bar ---------- */

const Status = styled.footer`
  display: flex;
  flex: none;
  align-items: center;
  justify-content: flex-end;
  height: 23px;
  border-top: 1px solid #fafafa;
  background: linear-gradient(#d9e6ee, #d5dae1 30%, #cdd2d8 60%, #bfc3c7);
`;

const StatusCell = styled.div<{ $w: number }>`
  display: flex;
  align-items: center;
  justify-content: center;
  width: ${(p) => p.$w}px;
  height: 22px;
  border-left: 1px solid #8d9499;
  font-size: 11px;
`;

const StatusField = styled(StatusCell)`
  justify-content: space-between;
  padding-left: 7px;
  font-size: 12px;
  color: #1c2f55;
  select { color: #000; }
`;

export default function App() {
  return (
    <Page>
      <Global />
      <RibbonBar />
      <Body>
        <Parts />
        <Center>
          <DrawRow>
            <Board>
              <i />
              <TopRuler />
              <SideRuler />
              <Canvas>
                <Drawing />
                <CanvasTitle>排版1</CanvasTitle>
                <CanvasTitle $right>FS2000-A-1.00-空气</CanvasTitle>
              </Canvas>
            </Board>
            <VScroll>
              <Chevron d="up" />
              <Chevron d="down" />
            </VScroll>
          </DrawRow>
          <EditToolbar />
          <CommandOutput />
        </Center>
        <Nests />
      </Body>
      <Status>
        <StatusCell $w={105}>-92.34, -432.02</StatusCell>
        <StatusField $w={98}>
          微调
          <Combo label="状态栏微调" value="1" w={62} h={21} boxed caret="#5c5c60" />
        </StatusField>
      </Status>
    </Page>
  );
}
